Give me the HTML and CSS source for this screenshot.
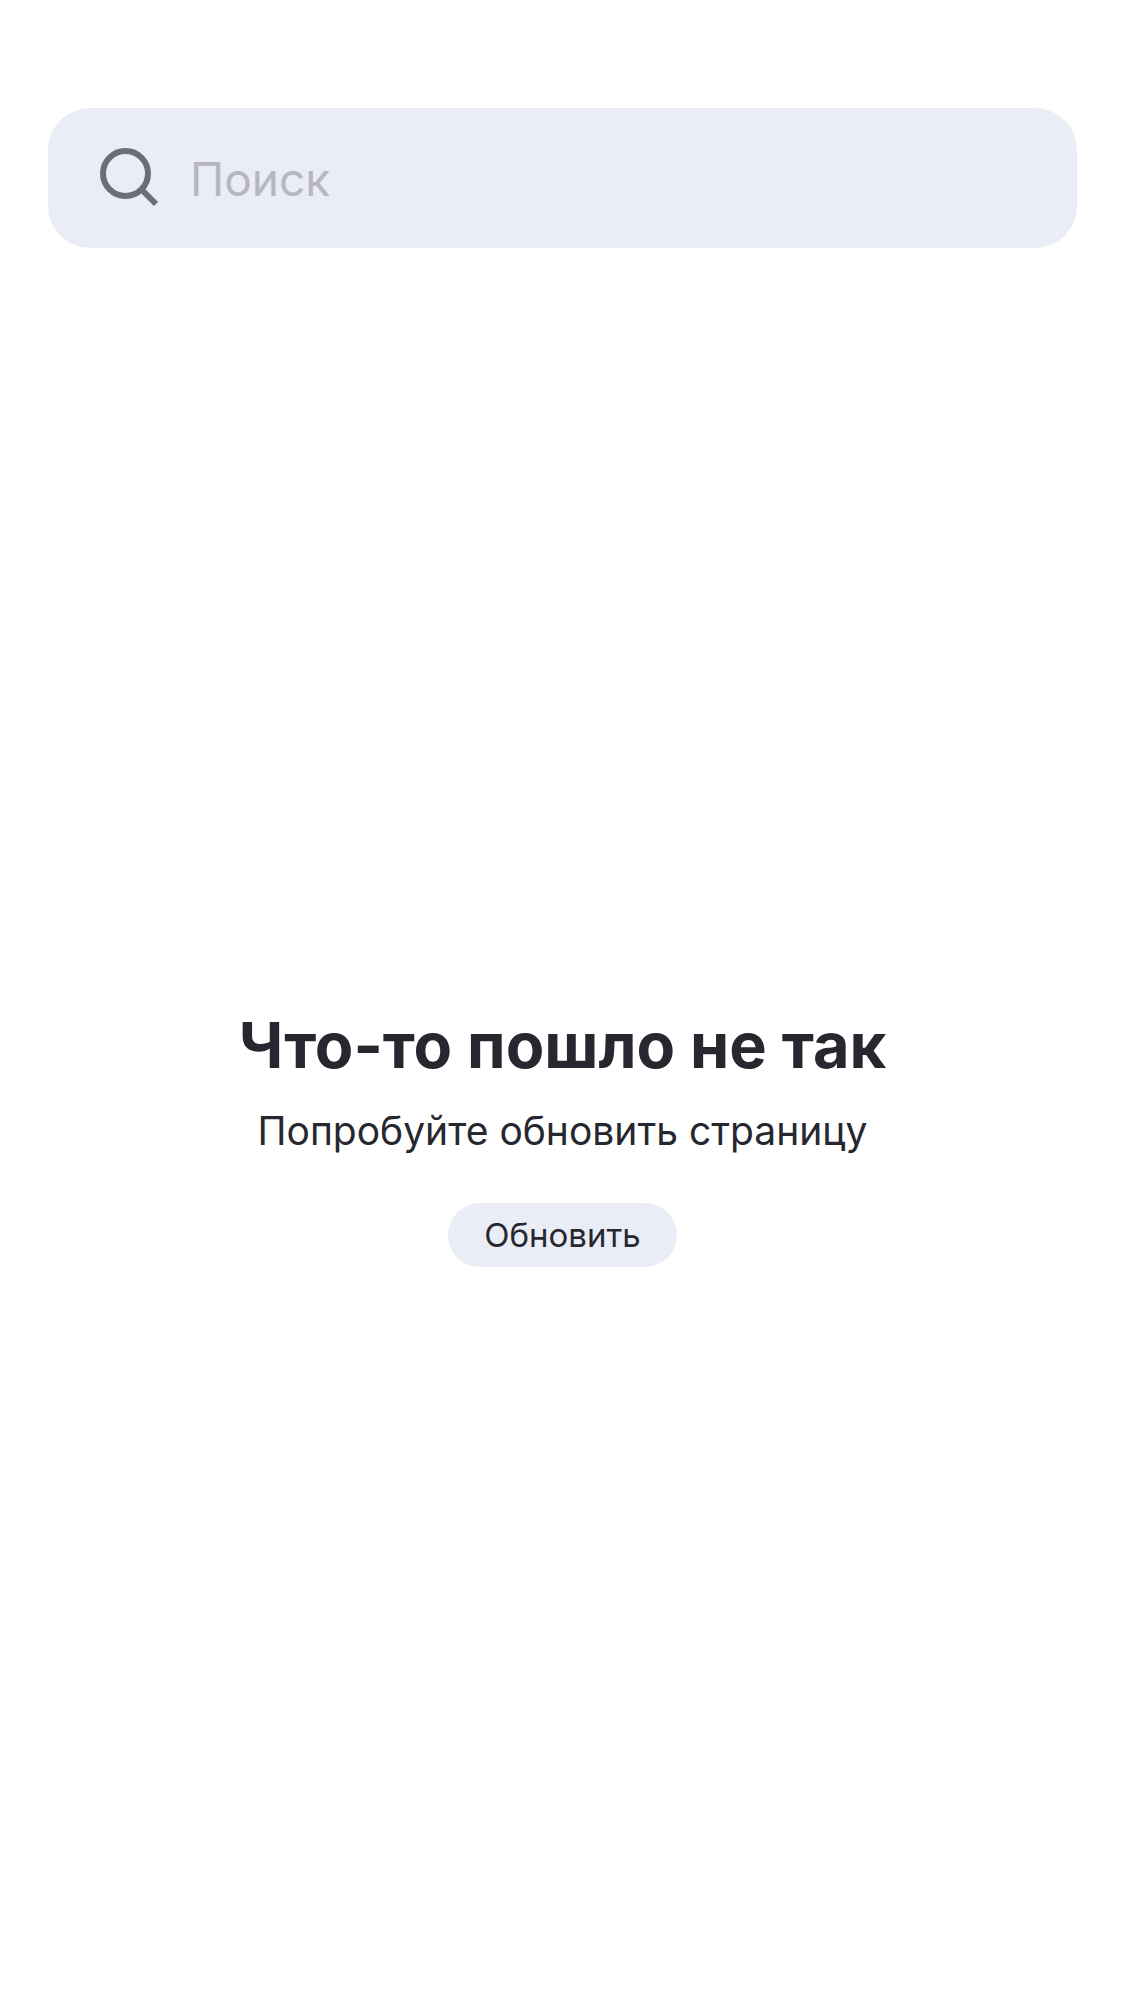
FILE: index.html
```html
<!DOCTYPE html>
<html lang="ru">
<head>
<meta charset="utf-8">
<meta name="viewport" content="width=device-width, initial-scale=1">
<title>Поиск</title>
<link rel="stylesheet" href="styles.css">
</head>
<body>
<header class="header">
  <form class="search" role="search">
    <svg class="search-icon" viewBox="0 0 60 60" fill="none" stroke="currentColor" stroke-width="6" aria-hidden="true">
      <circle cx="25.5" cy="25.5" r="22.5"/>
      <path d="M41 41L56 56"/>
    </svg>
    <input class="search-input" type="search" placeholder="Поиск" aria-label="Поиск">
  </form>
</header>
<main class="error">
  <h1 class="error-title">Что-то пошло не так</h1>
  <p class="error-text">Попробуйте обновить страницу</p>
  <button class="refresh" type="button">Обновить</button>
</main>
</body>
</html>
```

FILE: styles.css
```css
* {
  box-sizing: border-box;
}

body {
  margin: 0;
  min-height: 100vh;
  display: flex;
  flex-direction: column;
  background: #fff;
  color: #27282f;
  font-family: Inter, sans-serif;
}

.header {
  padding: 108px 48px 0;
}

.search {
  display: flex;
  align-items: center;
  gap: 30px;
  height: 140px;
  padding: 0 52px;
  border-radius: 42px;
  background: #eaedf5;
}

.search-icon {
  flex: none;
  width: 60px;
  height: 60px;
  color: #6a6d7a;
}

.search-input {
  flex: 1;
  min-width: 0;
  height: 100%;
  padding: 2px 0 0;
  border: 0;
  outline: 0;
  background: none;
  color: inherit;
  font: 400 46px/60px Inter, sans-serif;
}

.search-input::placeholder {
  color: #b6b7c1;
  opacity: 1;
}

.error {
  flex: 1;
  display: flex;
  flex-direction: column;
  align-items: center;
  justify-content: center;
  padding: 56px 48px 32px;
  text-align: center;
}

.error-title {
  margin: 0 0 20px;
  font-size: 63px;
  line-height: 76px;
  font-weight: 700;
}

.error-text {
  margin: 0 0 44px;
  font-size: 39px;
  line-height: 56px;
}

.refresh {
  height: 64px;
  padding: 0 36px;
  border: 0;
  border-radius: 32px;
  background: #eaedf5;
  color: inherit;
  font: 400 33px/40px Inter, sans-serif;
}
```
